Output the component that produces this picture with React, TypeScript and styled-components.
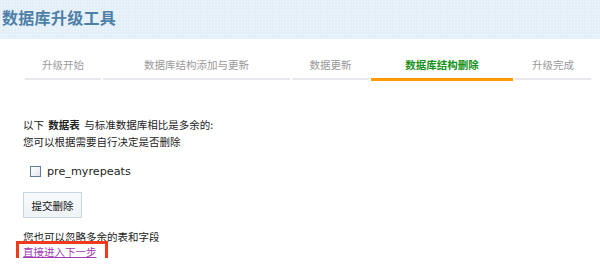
import React from 'react';
import styled, { createGlobalStyle } from 'styled-components';

const GlobalStyle = createGlobalStyle`
    html, body {
        margin: 0;
        padding: 0;
        background: #ffffff;
    }
    body {
        font-family: "Noto Sans CJK SC", "DejaVu Sans", sans-serif;
        font-size: 10.5px;
        line-height: 17px;
        color: #222222;
    }
`;

const Header = styled.header`
    height: 39px;
    padding: 7px 0 0 2px;
    box-sizing: border-box;
    background-color: #e3eff9;
    background-image: radial-gradient(circle, #f5f9fd 0.8px, transparent 1px);
    background-size: 3px 3px;
`;

const Title = styled.h1`
    margin: 0;
    font-size: 16px;
    line-height: 20px;
    font-weight: 700;
    color: #4d7fa8;
    letter-spacing: 0.3px;
`;

const Steps = styled.ul`
    display: flex;
    align-items: flex-end;
    gap: 2px;
    margin: 17px 0 0 25px;
    padding: 0;
    list-style: none;
`;

const Step = styled.li<{ $w: number; $active?: boolean }>`
    width: ${p => p.$w}px;
    box-sizing: border-box;
    padding-bottom: 5px;
    text-align: center;
    line-height: 17px;
    font-size: 10.5px;
    font-weight: ${p => (p.$active ? 700 : 400)};
    color: ${p => (p.$active ? '#17921a' : '#9a9a9a')};
    border-bottom: ${p => (p.$active ? '3px solid #ff9a00' : '2px solid #e9e7ee')};
    margin-bottom: ${p => (p.$active ? '0' : '1px')};
`;

const Content = styled.section`
    display: flex;
    flex-direction: column;
    align-items: flex-start;
    padding: 35px 0 0 23px;
`;

const Intro = styled.p`
    margin: 0;
    line-height: 17px;

    b {
        font-weight: 700;
        margin: 0 2px;
    }
`;

const TableList = styled.div`
    margin-top: 13px;
    padding-left: 7px;
`;

const TableRow = styled.label`
    display: flex;
    align-items: center;
    gap: 6px;
    height: 16px;
`;

const Check = styled.span`
    width: 11px;
    height: 11px;
    box-sizing: border-box;
    border: 1px solid #617f9c;
    background: linear-gradient(135deg, #ffffff 0%, #eef1f5 60%, #dde3ea 100%);
`;

const TableName = styled.span`
    font-family: "DejaVu Sans", sans-serif;
    font-size: 11.2px;
    color: #1e1e1e;
`;

const SubmitButton = styled.button`
    display: block;
    margin-top: 13px;
    width: 59px;
    height: 26px;
    padding: 0;
    font-family: inherit;
    font-size: 10.5px;
    color: #111111;
    background: linear-gradient(#f7fafc, #eef3f8);
    border: 1px solid #c9d6e2;
    border-radius: 0;
`;

const Note = styled.p`
    margin: 10px 0 0;
    line-height: 17px;
`;

const NextLink = styled.a`
    position: relative;
    display: block;
    height: 13px;
    line-height: 13px;
    color: #a03cb4;
    text-decoration: underline;

    &::after {
        content: '';
        position: absolute;
        top: -4px;
        left: -7px;
        right: -11px;
        bottom: -7px;
        border: 3px solid #ee3b1b;
    }
`;

const steps = [
    { label: '升级开始', w: 76 },
    { label: '数据库结构添加与更新', w: 187 },
    { label: '数据更新', w: 77 },
    { label: '数据库结构删除', w: 142, active: true },
    { label: '升级完成', w: 76 },
];

function App() {
    return (
        <>
            <GlobalStyle />
            <Header>
                <Title>数据库升级工具</Title>
            </Header>
            <Steps>
                {steps.map(s => (
                    <Step key={s.label} $w={s.w} $active={s.active}>{s.label}</Step>
                ))}
            </Steps>
            <Content>
                <Intro>
                    以下 <b>数据表</b> 与标准数据库相比是多余的:<br />
                    您可以根据需要自行决定是否删除
                </Intro>
                <TableList>
                    <TableRow>
                        <Check />
                        <TableName>pre_myrepeats</TableName>
                    </TableRow>
                </TableList>
                <SubmitButton>提交删除</SubmitButton>
                <Note>您也可以忽略多余的表和字段</Note>
                <NextLink href="#">直接进入下一步</NextLink>
            </Content>
        </>
    );
}

export default App;
